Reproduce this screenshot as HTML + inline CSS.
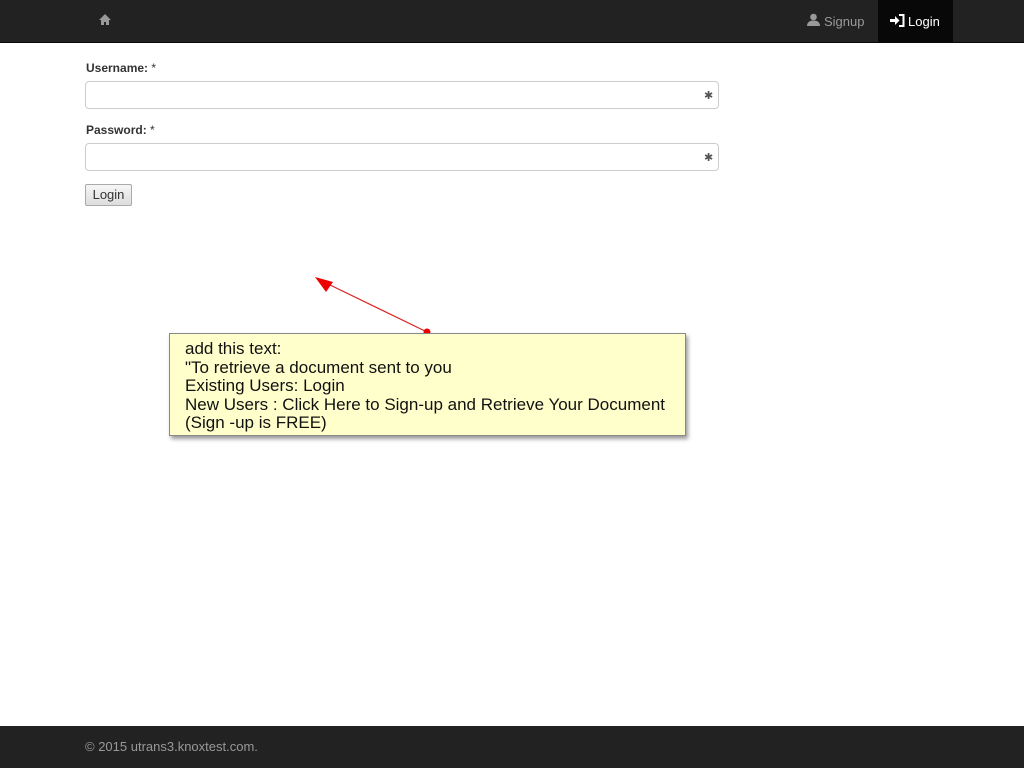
<!DOCTYPE html>
<html><head><meta charset="utf-8"><style>
body{margin:0;width:1024px;height:768px;position:relative;background:#fff;font-family:"Liberation Sans",sans-serif;overflow:hidden}
.nav{position:absolute;left:0;top:0;width:1024px;height:42px;background:#222;border-bottom:1px solid #080808}
.active{position:absolute;left:878px;top:0;width:75px;height:42px;background:#080808}
.lbl{position:absolute;left:86px;font-size:12px;font-weight:bold;color:#333}
.inp{position:absolute;left:85px;width:632px;height:26px;border:1px solid #ccc;border-radius:4px;background:#fff}
.btn{position:absolute;left:85px;top:184px;width:45px;height:20px;border:1px solid #aaa;border-radius:2px;background:linear-gradient(#f6f6f6,#ddd);font-size:13px;color:#333;text-align:center;line-height:20px}
.note{position:absolute;left:169px;top:333px;width:517px;height:103px;background:#ffffcc;border:1px solid #888;box-shadow:2px 3px 4px rgba(0,0,0,.4);font-size:17px;line-height:18.6px;color:#111;box-sizing:border-box;padding:6px 0 0 15px;white-space:nowrap}
.foot{position:absolute;left:0;top:726px;width:1024px;height:42px;background:#222;color:#999;font-size:13px}
.key{position:absolute;left:704px;width:13px;height:12px;color:#555;font-size:11px}
</style></head><body>
<div class="nav"></div>
<div class="active"></div>
<svg style="position:absolute;left:98px;top:13px" width="14" height="13" viewBox="0 0 14 13"><path d="M7 1L1 7h2v5h3V9h2v3h3V7h2z" fill="#999"/></svg>
<svg style="position:absolute;left:807px;top:13px" width="13" height="13" viewBox="0 0 13 13"><circle cx="6.5" cy="4" r="3.3" fill="#999"/><path d="M0 13c0-4 3-5.5 6.5-5.5S13 9 13 13z" fill="#999"/></svg>
<div style="position:absolute;left:824px;top:14px;font-size:13px;color:#999">Signup</div>
<svg style="position:absolute;left:890px;top:14px" width="15" height="13" viewBox="0 0 15 13"><path d="M0 5h5V2l4.5 4.5L5 11V8H0z" fill="#fff"/><path d="M9 1h4.5v11H9" stroke="#fff" stroke-width="2" fill="none"/></svg>
<div style="position:absolute;left:908px;top:14px;font-size:13px;color:#fff">Login</div>
<div class="lbl" style="top:61px">Username: <span style="font-weight:normal">*</span></div>
<div class="inp" style="top:81px"></div>
<div class="key" style="top:89px">✱</div>
<div class="lbl" style="top:123px">Password: <span style="font-weight:normal">*</span></div>
<div class="inp" style="top:143px"></div>
<div class="key" style="top:151px">✱</div>
<div class="btn">Login</div>
<svg style="position:absolute;left:0;top:0" width="1024" height="768"><line x1="427" y1="332" x2="328" y2="284" stroke="#d22" stroke-width="1.2"/><polygon points="315,277 333,282 326,292" fill="#e00"/><circle cx="427" cy="332" r="3.5" fill="#e00"/></svg>
<div class="note">add this text:<br>"To retrieve a document sent to you<br>Existing Users: Login<br>New Users : Click Here to Sign-up and Retrieve Your Document<br>(Sign -up is FREE)</div>
<div class="foot"><div style="position:absolute;left:85px;top:13px">© 2015 utrans3.knoxtest.com.</div></div>
</body></html>
